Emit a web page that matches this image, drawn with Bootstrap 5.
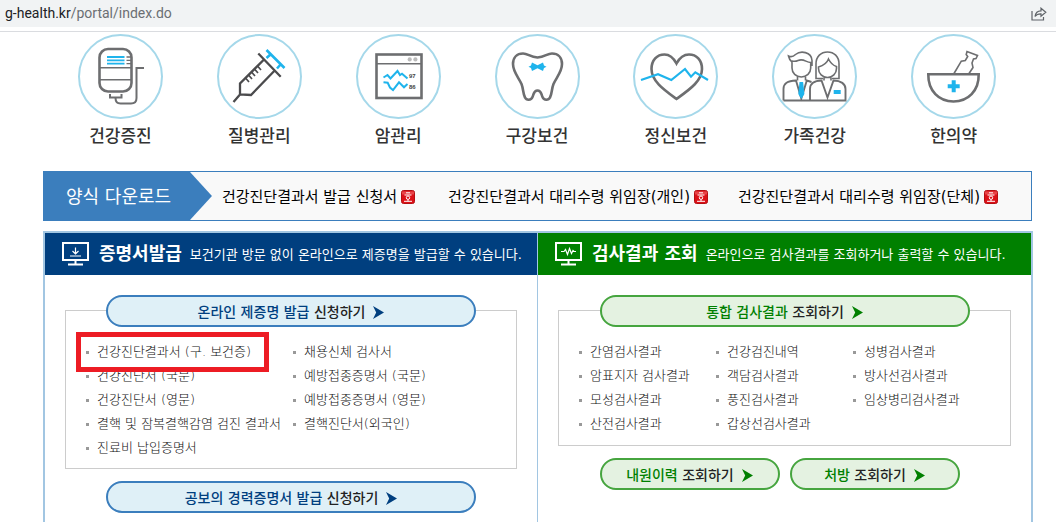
<!DOCTYPE html>
<html lang="ko">
<head>
<meta charset="utf-8">
<meta name="viewport" content="width=device-width, initial-scale=1">
<title>g-health.kr</title>
<link href="https://cdn.jsdelivr.net/npm/bootstrap@5.3.0/dist/css/bootstrap.min.css" rel="stylesheet">
<style>
  :root { --gh-blue: #3b7ebd; --gh-navy: #003f7f; --gh-green: #008000; --gh-leaf: #46a53f; --gh-sky: #a2c6e2; }
  body { font-family: "DejaVu Sans", "Noto Sans CJK KR", sans-serif; color: #333; font-size: 13px; line-height: 24px; }
  a { color: inherit; text-decoration: none; }

  .address { background: #f1f3f4; height: 27px; padding: 0 9px 0 5px; font: 14px/27px Roboto, sans-serif; color: #6b6f73; }
  .address strong { font-weight: 400; color: #202124; }
  .address-edge { height: 5px; border-bottom: 1px solid #dadce0; }

  .page { padding: 2px 23px 0 43px; }
  .topics { padding: 0 10px 0 8px; margin-bottom: 23px; }
  .topics a { flex: 1 1 0; font-size: 17px; font-weight: 500; text-align: center; }
  .topics svg { display: block; width: 85px; height: 85px; margin: 0 auto 5px; fill: none; stroke: #6d6e70; stroke-width: 2.6; }
  .ring { stroke: #a5d8ea; stroke-width: 2; }
  .hot { stroke: #1fb4ec; }
  .hot-fill { fill: #1fb4ec; stroke: none; }

  .forms { background: #f9f9f9; border: 1px solid var(--gh-blue); height: 50px; margin: 0 1px 10px 0; font-size: 15px; color: #000; }
  .forms h2 { width: 170px; margin: 0; padding-left: 22px; background: var(--gh-blue); color: #fff; font-size: 18px; font-weight: 400; line-height: 50px;
    clip-path: polygon(0 0, 146px 0, 100% 50%, 146px 100%, 0 100%); }
  .forms ul { padding: 2px 33px 0 10px; }
  .forms li { width: 226px; }
  .forms li + li { width: 290px; }
  .forms li:last-child { width: auto; }
  .forms svg { width: 14px; height: 14px; margin-left: 4px; vertical-align: -2px; }

  .panels { display: grid; grid-template-columns: 492fr 494fr; border: 2px solid var(--gh-sky); border-bottom: 0; }
  .panels > section { min-width: 0; }
  .panels > section + section { border-left: 1px solid var(--gh-sky); }
  .panel-head { height: 42px; padding-left: 17px; color: #fff; white-space: nowrap; }
  .panel-head h2 { font-size: 18px; font-weight: 700; line-height: 42px; margin: 0 8px 0 10px; }
  .panel-head p { margin: 0; padding-top: 2px; }
  .panel-head svg { width: 27px; height: 24px; flex: none; }
  .head-navy { background: var(--gh-navy); }
  .head-green { background: var(--gh-green); }
  .panel-main { padding: 20px 20px 9px; }

  .pill { height: 32px; padding: 1px 0 0; border: 2px solid var(--gh-blue); border-radius: 16px; background: #dff0f7; color: #222; font-size: 14px; font-weight: 500; line-height: 28px; }
  .pill span { color: var(--gh-navy); }
  .pill svg { width: 11px; height: 13px; margin-left: 8px; fill: var(--gh-navy); vertical-align: -2px; }
  .pill-green { border-color: var(--gh-leaf); background: #e4f2e1; }
  .pill-green span { color: var(--gh-green); }
  .pill-green svg { fill: var(--gh-green); }
  .pill-wide { width: 370px; max-width: 90%; }
  .pill-mid { width: 180px; }
  .pill-short { width: 170px; }
  .pill-over { position: relative; z-index: 1; margin-bottom: -17px; }
  .pill-pair { gap: 10px; }

  .items { border: 1px solid #ccc; padding: 29px 20px 8px; margin-bottom: 12px; display: grid; font-weight: 300; color: #111; }
  .items-two { grid-template-columns: 207fr 203fr; }
  .items-three { grid-template-columns: repeat(3, 1fr); padding-bottom: 9px; }
  .items ul { list-style: none; margin: 0; padding: 0; }
  .items li { display: flex; align-items: center; white-space: nowrap; }
  .items li::before { content: ""; width: 3px; height: 3px; margin-right: 8px; background: #999; }
  .marked { position: relative; }
  .marked::after { content: ""; position: absolute; inset: -8px auto auto -10px; width: 193px; height: 40px; border: 5px solid #ed1c24; }
</style>
</head>
<body class="bg-white d-flex flex-column min-vh-100">

<svg class="d-none">
  <symbol id="arrow" viewBox="0 0 11 13"><path d="M0 0 11 6.5 0 13 3.2 6.5Z"/></symbol>
  <symbol id="doc" viewBox="0 0 14 14">
    <rect x=".5" y=".5" width="13" height="13" rx="2" fill="#dc1118" stroke="#b30f12"/>
    <path d="M1 1.500h12v3H1z" fill="#f0696b" opacity=".6"/>
    <path d="M5 2.800h4M3.500 5h7M3 11.300h8M7 9.500v1.800" stroke="#fff" fill="none"/>
    <circle cx="7" cy="7.700" r="1.700" stroke="#fff" fill="none"/>
  </symbol>
</svg>

<header>
  <div class="address d-flex justify-content-between align-items-center">
    <div><strong>g-health.kr</strong>/portal/index.do</div>
    <svg width="16" height="14" viewBox="0 0 16 14" fill="none" stroke="#5f6368" stroke-width="1.200" aria-label="공유"><path d="M1 4v9h11.500V10"/><path d="M4 9.500C4.500 6 6.500 4 10 3.900V1.200l4.800 4.100L10 9.200V6.800C7.500 6.700 5.500 7.500 4 9.500Z"/></svg>
  </div>
  <div class="address-edge"></div>
</header>

<main class="page flex-grow-1 d-flex flex-column">
  <nav class="topics d-flex">
    <a href="#"><svg viewBox="0 0 85 85"><circle class="ring" cx="42.500" cy="42.500" r="41.500"/>
      <rect x="21.500" y="15" width="32" height="42.500" rx="8.500"/>
      <path class="hot" stroke-width="1.800" d="M29 23h17.500M29 26.300h17.500M29 29.600h17.500"/>
      <path stroke-width="1.300" d="M48.500 23H53M48.500 26.300H53M48.500 29.600H53"/>
      <path stroke-width="1.600" d="M22 33.700h31M22 45.700h31"/>
      <path stroke-width="2" d="M32 60v3.500h11.500V60M37.500 64c0 4 2 5.500 5 5.500h10.500c4 0 5.500-2 5.500-5.500V34H66"/></svg>건강증진</a>
    <a href="#"><svg viewBox="0 0 85 85"><circle class="ring" cx="42.500" cy="42.500" r="41.500"/>
      <g stroke="#4b4b4d" stroke-width="2.300"><path d="M41.300 19.500 63.700 42.700M47 25.500 23 49.500v11L34 61 57.700 36.500M23 60.500l-6.500 7.500"/>
      <path stroke-width="1.700" d="m40.500 32 3.500 4m-6.500-1 3.500 4m-6.500-1 3.500 4m-6.500-1 3.500 4m-6.500-1 3.500 4"/></g>
      <path class="hot" d="M49.500 16 67.500 34M54 20l-4.500 4M64 30l-4 4.500"/></svg>질병관리</a>
    <a href="#"><svg viewBox="0 0 85 85"><circle class="ring" cx="42.500" cy="42.500" r="41.500"/>
      <rect x="20.500" y="20.500" width="45" height="43.500"/><path stroke-width="1.400" d="M21 29.700h44"/>
      <g fill="#bbb" stroke="none"><circle cx="53.700" cy="25.400" r="2.100"/><circle cx="59.400" cy="25.400" r="2.100"/></g>
      <path class="hot" stroke-width="2" d="m27.500 43.500 4-2.500 3 3.500 7-7.500 2.500 4 2-1.300 5.500 4.800M27.500 48.300l4.200.4 2.300 4.800 3 2.500 6-7.700 5 5 3.500-3.300"/>
      <g fill="#444" stroke="none" font-family="Liberation Sans, sans-serif" font-size="6" font-weight="700"><text x="53" y="43.500">97</text><text x="53" y="54.500">86</text></g></svg>암관리</a>
    <a href="#"><svg viewBox="0 0 85 85"><circle class="ring" cx="42.500" cy="42.500" r="41.500"/>
      <path d="M42.500 23.500C35 23 33 19.500 28 19.500c-6 0-10 4-10 10.500 0 8 6 14 8.500 20 2 5 1.500 10 3.500 13.500 1.500 3 6 3 7.500-.5 1.500-3 1-6.500 5-6.500s3.500 3.500 5 6.500c1.500 3.500 6 3.500 7.500.5 2-3.500 1.500-8.500 3.500-13.500 2.500-6 8.500-12 8.500-20 0-6.500-4-10.500-10-10.500-5 0-7 3.500-14.500 4Z"/>
      <path class="hot-fill" d="m37 28.500 5.500 2.700L48 28.500l1 3 2.500 1.300L49 34l-1 3-5.500-2.700L37 37l-1-3-2.500-1.200L36 31.500Z"/></svg>구강보건</a>
    <a href="#"><svg viewBox="0 0 85 85"><circle class="ring" cx="42.500" cy="42.500" r="41.500"/>
      <path d="M43.500 29.500C40 23 36 20.500 31.500 20.500 24 20.500 18.500 26 18.500 35c0 12 12 20.500 25 30 13-9.500 25.500-18 25.500-30 0-9-5.500-14.500-13-14.500-4.500 0-9 2.500-12.500 9Z"/>
      <path class="hot" stroke-width="2.200" d="m8 46 17-5.700L38.300 46 52 35l6 7.700 4.300-4.400L75 46"/></svg>정신보건</a>
    <a href="#"><svg viewBox="0 0 85 85"><circle class="ring" cx="42.500" cy="42.500" r="41.500"/>
      <g stroke-width="1.600"><path d="M20.500 28.500c-2-1.500-3.500-3.500-4-6.500 3 1.500 5 .5 7-1.500 5-4 16-3 16.500 6v5.500M20 27v7c0 5 4 9 9.300 9s9.400-4 9.400-9v-5.500c-4.700 0-7-4.500-12.700-2-2 1-4 1-6 .5"/>
      <path d="M25.500 43v3.500M33.500 43v3.500M44 42V30c0-7.500 5-12 11.500-12S67 22.500 67 30v14.500h-7M44 42v2.500h7M46.500 33c5-1.500 8.500-4 10-8 2 4 4.500 6.500 8 7.500v2c0 5-4 9-9 9s-9-4-9-9ZM52 43v3.500M59 43v3.500"/></g>
      <g stroke-width="1.900"><path d="M11.500 66.500V55c0-6 4-8 12.500-8.500l5.300 18 5.500-18 4.700 1.500M38 66.500V55c0-5 4-8.500 11.500-8.500l6 17 6-17c7.500 0 12 3.500 12 8.500v11.500ZM11.500 66.500H38"/></g>
      <path class="hot-fill" d="M27.500 48h3.600l1.300 12-3.100 5-3-5ZM61.700 56h7v4h-7z"/></svg>가족건강</a>
    <a href="#"><svg viewBox="0 0 85 85"><circle class="ring" cx="42.500" cy="42.500" r="41.500"/>
      <path d="M17.300 40.300h50.400C68 57 57 67.500 42.500 67.500S17 57 17.300 40.300Z"/>
      <path stroke-width="1.600" d="m43 39.500 7.300-12.300 4-.7 2.400-4-1.500-2L56 17.500l10.500 4-1.500 3-2.500.5-1.500 4 1 4.500-4 6"/>
      <path class="hot-fill" d="M40.700 46.300h4v4h4v4h-4v4h-4v-4h-4v-4h4z"/></svg>한의약</a>
  </nav>

  <div class="forms d-flex">
    <h2>양식 다운로드</h2>
    <ul class="list-unstyled mb-0 flex-grow-1 d-flex align-items-center text-nowrap">
      <li><a href="#">건강진단결과서 발급 신청서<svg><use href="#doc"/></svg></a></li>
      <li><a href="#">건강진단결과서 대리수령 위임장(개인)<svg><use href="#doc"/></svg></a></li>
      <li><a href="#">건강진단결과서 대리수령 위임장(단체)<svg><use href="#doc"/></svg></a></li>
    </ul>
  </div>

  <div class="panels flex-grow-1">
    <section>
      <div class="panel-head head-navy d-flex align-items-center">
        <svg viewBox="0 0 27 24" fill="none" stroke="#fff" stroke-width="2"><path d="M1 1h25v17H1ZM13.500 18v4M6 22.500h15"/><path stroke-width="1.200" d="M13.500 5.500v6M10.500 9l3 3 3-3M8 14h11"/></svg>
        <h2>증명서발급</h2>
        <p>보건기관 방문 없이 온라인으로 제증명을 발급할 수 있습니다.</p>
      </div>
      <div class="panel-main">
        <button type="button" class="btn pill pill-wide pill-over d-block mx-auto"><span>온라인 제증명 발급</span> 신청하기<svg><use href="#arrow"/></svg></button>
        <div class="items items-two">
          <ul>
            <li class="marked"><a href="#">건강진단결과서 (구. 보건증)</a></li>
            <li><a href="#">건강진단서 (국문)</a></li>
            <li><a href="#">건강진단서 (영문)</a></li>
            <li><a href="#">결핵 및 잠복결핵감염 검진 결과서</a></li>
            <li><a href="#">진료비 납입증명서</a></li>
          </ul>
          <ul>
            <li><a href="#">채용신체 검사서</a></li>
            <li><a href="#">예방접종증명서 (국문)</a></li>
            <li><a href="#">예방접종증명서 (영문)</a></li>
            <li><a href="#">결핵진단서(외국인)</a></li>
          </ul>
        </div>
        <button type="button" class="btn pill pill-wide d-block mx-auto"><span>공보의 경력증명서 발급</span> 신청하기<svg><use href="#arrow"/></svg></button>
      </div>
    </section>
    <section>
      <div class="panel-head head-green d-flex align-items-center">
        <svg viewBox="0 0 27 24" fill="none" stroke="#fff" stroke-width="2"><path d="M1 1h25v17H1ZM13.500 18v4M6 22.500h15"/><path stroke-width="1.200" d="M6 9.500h3l1.500-2 2 5 2-6 2 5 1.500-3 1 1H21"/></svg>
        <h2>검사결과 조회</h2>
        <p>온라인으로 검사결과를 조회하거나 출력할 수 있습니다.</p>
      </div>
      <div class="panel-main">
        <button type="button" class="btn pill pill-green pill-wide pill-over d-block mx-auto"><span>통합 검사결과</span> 조회하기<svg><use href="#arrow"/></svg></button>
        <div class="items items-three">
          <ul>
            <li><a href="#">간염검사결과</a></li>
            <li><a href="#">암표지자 검사결과</a></li>
            <li><a href="#">모성검사결과</a></li>
            <li><a href="#">산전검사결과</a></li>
          </ul>
          <ul>
            <li><a href="#">건강검진내역</a></li>
            <li><a href="#">객담검사결과</a></li>
            <li><a href="#">풍진검사결과</a></li>
            <li><a href="#">갑상선검사결과</a></li>
          </ul>
          <ul>
            <li><a href="#">성병검사결과</a></li>
            <li><a href="#">방사선검사결과</a></li>
            <li><a href="#">임상병리검사결과</a></li>
          </ul>
        </div>
        <div class="pill-wide pill-pair mx-auto d-flex">
          <button type="button" class="btn pill pill-green pill-mid"><span>내원이력</span> 조회하기<svg><use href="#arrow"/></svg></button>
          <button type="button" class="btn pill pill-green pill-short"><span>처방</span> 조회하기<svg><use href="#arrow"/></svg></button>
        </div>
      </div>
    </section>
  </div>
</main>

<script src="https://cdn.jsdelivr.net/npm/bootstrap@5.3.0/dist/js/bootstrap.bundle.min.js"></script>
</body>
</html>
